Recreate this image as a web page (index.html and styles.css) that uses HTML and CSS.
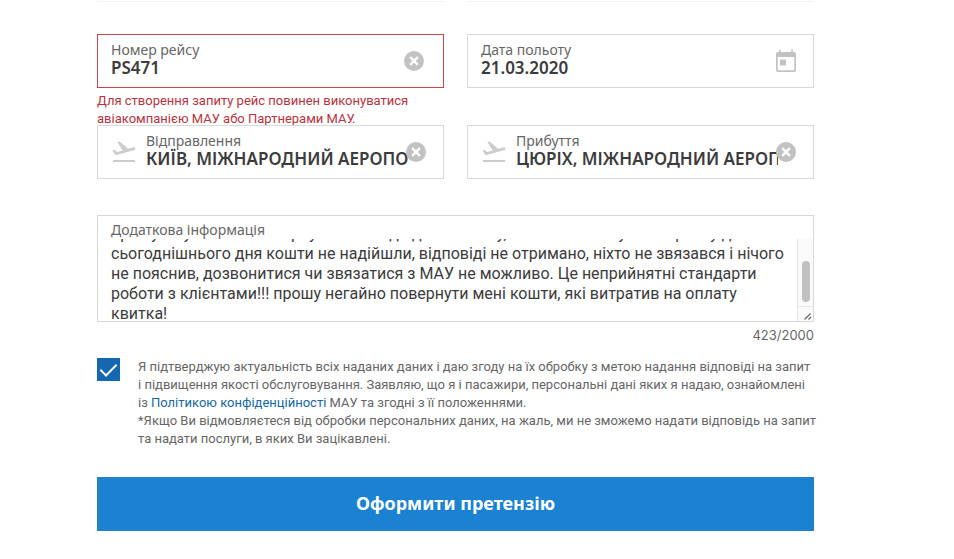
FILE: index.html
```
<!doctype html>
<html lang="uk">
<head>
<meta charset="utf-8">
<title>Оформити претензію</title>
<link rel="stylesheet" href="styles.css">
</head>

<body>
<form class="claim">
    <div class="row prev">
        <div class="edge"></div>
        <div class="edge"></div>
    </div>
    <div class="row">
        <div class="field error">
            <div class="text">
                <label for="flight">Номер рейсу</label>
                <input type="text" id="flight" value="PS471" aria-describedby="flight-error">
            </div>
            <button type="button" class="clear" aria-label="Очистити">
                <svg width="20" height="20" viewBox="0 0 20 20"><circle cx="10" cy="10" r="10" fill="#c2c2c2"/><path d="M6.2 6.2l7.6 7.6M13.8 6.2l-7.6 7.6" stroke="#fff" stroke-width="2.4"/></svg>
            </button>
            <p class="message" id="flight-error">Для створення запиту рейс повинен виконуватися<br>авіакомпанією МАУ або Партнерами МАУ.</p>
        </div>
        <div class="field">
            <div class="text">
                <label for="date">Дата польоту</label>
                <input type="text" id="date" value="21.03.2020">
            </div>
            <button type="button" class="calendar" aria-label="Календар">
                <svg width="20" height="24" viewBox="0 0 20 24"><path d="M3.2 0.5h1.6V3h10.4V0.5h1.6V3H18a2 2 0 0 1 2 2v16a2 2 0 0 1-2 2H2a2 2 0 0 1-2-2V5a2 2 0 0 1 2-2h1.2zM1.7 8v12.5q0 .8.8.8h15q.8 0 .8-.8V8z" fill="#c2c2c2" fill-rule="evenodd"/><path d="M4 10.5h6v6H4z" fill="#c2c2c2"/></svg>
            </button>
        </div>
        <div class="field place">
            <svg class="plane" width="24" height="22" viewBox="0 0 24 22"><path d="M0.5 9.2l1.8-.5 2.8 2.2 5.6-1.5L5.4 1.2 7.8.5l8.2 7.3 5.2-1.4c1-.3 2 .2 2.2 1 .2.9-.4 1.6-1.4 1.9L3.3 14.3z" fill="#ccc"/><path d="M1 19h22v2H1z" fill="#ccc"/></svg>
            <div class="text">
                <label for="from">Відправлення</label>
                <input type="text" id="from" value="КИЇВ, МІЖНАРОДНИЙ АЕРОПО">
            </div>
            <button type="button" class="clear" aria-label="Очистити">
                <svg width="20" height="20" viewBox="0 0 20 20"><circle cx="10" cy="10" r="10" fill="#c2c2c2"/><path d="M6.2 6.2l7.6 7.6M13.8 6.2l-7.6 7.6" stroke="#fff" stroke-width="2.4"/></svg>
            </button>
        </div>
        <div class="field place">
            <svg class="plane" width="24" height="22" viewBox="0 0 24 22"><path d="M0.5 9.2l1.8-.5 2.8 2.2 5.6-1.5L5.4 1.2 7.8.5l8.2 7.3 5.2-1.4c1-.3 2 .2 2.2 1 .2.9-.4 1.6-1.4 1.9L3.3 14.3z" fill="#ccc"/><path d="M1 19h22v2H1z" fill="#ccc"/></svg>
            <div class="text">
                <label for="to">Прибуття</label>
                <input type="text" id="to" value="ЦЮРІХ, МІЖНАРОДНИЙ АЕРОП">
            </div>
            <button type="button" class="clear" aria-label="Очистити">
                <svg width="20" height="20" viewBox="0 0 20 20"><circle cx="10" cy="10" r="10" fill="#c2c2c2"/><path d="M6.2 6.2l7.6 7.6M13.8 6.2l-7.6 7.6" stroke="#fff" stroke-width="2.4"/></svg>
            </button>
        </div>
    </div>
    <div class="info">
        <label for="info">Додаткова інформація</label>
        <div class="area">
            <textarea id="info">


прошу за умовами повернути кошти до дня вильоту, але після скасування рейсу до
сьогоднішнього дня кошти не надійшли, відповіді не отримано, ніхто не звязався і нічого
не пояснив, дозвонитися чи звязатися з МАУ не можливо. Це неприйнятні стандарти
роботи з клієнтами!!! прошу негайно повернути мені кошти, які витратив на оплату
квитка!</textarea>
            <div class="bar">
                <div class="track"><div class="thumb"></div></div>
                <svg class="grip" width="15" height="14" viewBox="0 0 15 14"><path d="M6.5 12.5l6-6M10.5 12.5l2.5-2.5" stroke="#666" stroke-width="1.2"/></svg>
            </div>
        </div>
    </div>
    <p class="count">423/2000</p>
    <div class="agree">
        <input type="checkbox" id="agree" checked>
        <label for="agree">Я підтверджую актуальність всіх наданих даних і даю згоду на їх обробку з метою надання відповіді на запит<br>і підвищення якості обслуговування. Заявляю, що я і пасажири, персональні дані яких я надаю, ознайомлені<br>із <a href="#">Політикою конфіденційності</a> МАУ та згодні з її положеннями.<br>*Якщо Ви відмовляєтеся від обробки персональних даних, на жаль, ми не зможемо надати відповідь на запит<br>та надати послуги, в яких Ви зацікавлені.</label>
    </div>
    <button type="submit" class="submit">Оформити претензію</button>
</form>
<script>
var oInfo = document.getElementById("info");
oInfo.scrollTop = 55;
</script>
</body>
</html>
```

FILE: styles.css
```
*{box-sizing:border-box;}
body,p{margin:0;}
body{background:#fff;color:#666;font:13px/18px Roboto,"Noto Sans",sans-serif;}
input,textarea,button{font-family:inherit;margin:0;padding:0;border:0;background:none;outline:0;}
button{cursor:pointer;}
svg{display:block;}
.claim{margin:0 140px 0 97px;}
.row{display:grid;grid-template-columns:1fr 1fr;gap:37px 23px;}
.prev{margin-bottom:32px;}
.edge{height:2px;border-bottom:1px solid #f3f3f3;}
.field{position:relative;display:flex;align-items:center;height:54px;padding:0 17px 0 13px;border:1px solid #d9d9d9;}
.text{flex:1;min-width:0;padding-bottom:4px;}
.text label,.info label{display:block;font:14px/18px "Noto Sans",sans-serif;}
.text input{display:block;width:100%;height:24px;margin:-3px 0;color:#3c3c3c;font:600 17px/24px "Noto Sans",sans-serif;}
.field.error{border-color:#d0434b;}
.error .clear{margin-right:2px;}
.message{position:absolute;top:57px;left:-1px;color:#b8323e;white-space:nowrap;}
.place{padding-left:14px;}
.place .clear{margin-left:-2px;}
.plane{margin-right:10px;}
.info{margin-top:36px;padding:5px 0 0 13px;border:1px solid #d9d9d9;}
.area{display:flex;}
.info textarea{flex:1;min-width:0;height:82px;color:#3c3c3c;font-size:16px;line-height:20px;white-space:pre;overflow-x:hidden;overflow-y:scroll;resize:none;scrollbar-width:none;}
.bar{display:flex;flex-direction:column;width:16px;background:#fafafa;border-left:1px solid #e6e6e6;}
.track{flex:1;padding:22px 3px 0 4px;border-bottom:1px solid #e6e6e6;}
.thumb{height:41px;background:#c1c1c1;border-radius:4px;}
.count{margin-top:4px;text-align:right;font-family:Inter,sans-serif;}
.agree{display:flex;gap:18px;margin-top:14px;}
.agree input{flex:none;width:23px;height:23px;appearance:none;background:#1467b0;display:grid;place-items:center;}
.agree input:checked:before{content:"";width:7px;height:14px;margin-top:-3px;border:solid #fff;border-width:0 2px 2px 0;transform:rotate(45deg);}
.agree label{flex:1;white-space:nowrap;}
.agree a{color:#1467a5;text-decoration:none;}
.submit{display:block;width:100%;height:54px;margin-top:29px;padding-bottom:3px;background:#1b82d2;color:#fff;font:700 18px/24px "Noto Sans",sans-serif;}
```
